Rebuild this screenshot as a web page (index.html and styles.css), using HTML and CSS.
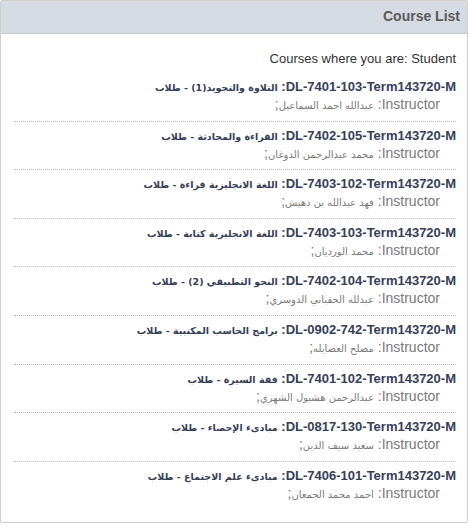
FILE: index.html
```html
<!DOCTYPE html>
<html lang="ar" dir="rtl">
<head>
<meta charset="utf-8">
<link rel="stylesheet" href="styles.css">
</head>
<body>
<div class="panel">
  <div class="panel-head">Course List</div>
  <div class="panel-body">
    <div class="intro" dir="ltr">Courses where you are: Student</div>
    <ul class="courses">
      <li class="course"><a class="title">DL-7401-103-Term143720-M: <span class="ar">التلاوة والتجويد(1) - طلاب</span></a><div class="instr">Instructor: <span class="ar">عبدالله احمد السماعيل</span>;</div></li>
      <li class="course"><a class="title">DL-7402-105-Term143720-M: <span class="ar">القراءة والمحادثة - طلاب</span></a><div class="instr">Instructor: <span class="ar">محمد عبدالرحمن الدوغان</span>;</div></li>
      <li class="course"><a class="title">DL-7403-102-Term143720-M: <span class="ar">اللغة الانجليزية قراءة - طلاب</span></a><div class="instr">Instructor: <span class="ar">فهد عبدالله بن دهيش</span>;</div></li>
      <li class="course"><a class="title">DL-7403-103-Term143720-M: <span class="ar">اللغة الانجليزية كتابة - طلاب</span></a><div class="instr">Instructor: <span class="ar">محمد الورديان</span>;</div></li>
      <li class="course"><a class="title">DL-7402-104-Term143720-M: <span class="ar">النحو التطبيقي (2) - طلاب</span></a><div class="instr">Instructor: <span class="ar">عبدلله الحقباني الدوسري</span>;</div></li>
      <li class="course"><a class="title">DL-0902-742-Term143720-M: <span class="ar">برامج الحاسب المكتبية - طلاب</span></a><div class="instr">Instructor: <span class="ar">مصلح العضايله</span>;</div></li>
      <li class="course"><a class="title">DL-7401-102-Term143720-M: <span class="ar">فقة السيرة - طلاب</span></a><div class="instr">Instructor: <span class="ar">عبدالرحمن هشبول الشهري</span>;</div></li>
      <li class="course"><a class="title">DL-0817-130-Term143720-M: <span class="ar">مبادىء الإحصاء - طلاب</span></a><div class="instr">Instructor: <span class="ar">سعيد سيف الدين</span>;</div></li>
      <li class="course"><a class="title">DL-7406-101-Term143720-M: <span class="ar">مبادىء علم الاجتماع - طلاب</span></a><div class="instr">Instructor: <span class="ar">احمد محمد الجمعان</span>;</div></li>
    </ul>
  </div>
</div>
</body>
</html>
```
FILE: styles.css
```css
html, body {
  margin: 0;
  padding: 0;
  background: #ffffff;
}
body {
  font-family: "Liberation Sans", Arial, "DejaVu Sans", sans-serif;
  font-size: 14px;
  color: #333;
}
.panel {
  width: 466px;
  height: 521px;
  border: 1px solid #cfcfcf;
  border-radius: 2px;
  box-shadow: 0 1px 2px rgba(0,0,0,0.08);
  background: #fff;
}
.panel-head {
  height: 32px;
  line-height: 31px;
  background: #d5dbe3;
  border-bottom: 1px solid #c4c9d0;
  padding: 0 7px;
  font-weight: bold;
  font-size: 14px;
  color: #5a5a5a;
}
.panel-body {
  padding: 16px 11px 0 13px;
}
.intro {
  text-align: right;
  height: 18px;
  line-height: 18px;
  font-size: 13px;
  color: #333;
  margin-bottom: 4px;
}
.courses {
  list-style: none;
  margin: 0;
  padding: 0;
}
.course {
  padding: 6px 0 7px;
}
.course + .course {
  border-top: 1px dotted #b8b8b8;
  padding-top: 5px;
}
.title {
  display: block;
  height: 18px;
  overflow: hidden;
  font-weight: bold;
  font-size: 13px;
  line-height: 18px;
  color: #34405a;
  text-decoration: none;
}
.title .ar {
  font-family: "DejaVu Sans", sans-serif;
  font-size: 9.5px;
  line-height: 1;
}
.instr {
  height: 17.6px;
  line-height: 17.6px;
  padding-right: 16px;
  color: #7a7a7a;
  font-size: 14px;
}
.instr .ar {
  font-family: "DejaVu Sans", sans-serif;
  font-size: 10px;
  line-height: 1;
}
```
